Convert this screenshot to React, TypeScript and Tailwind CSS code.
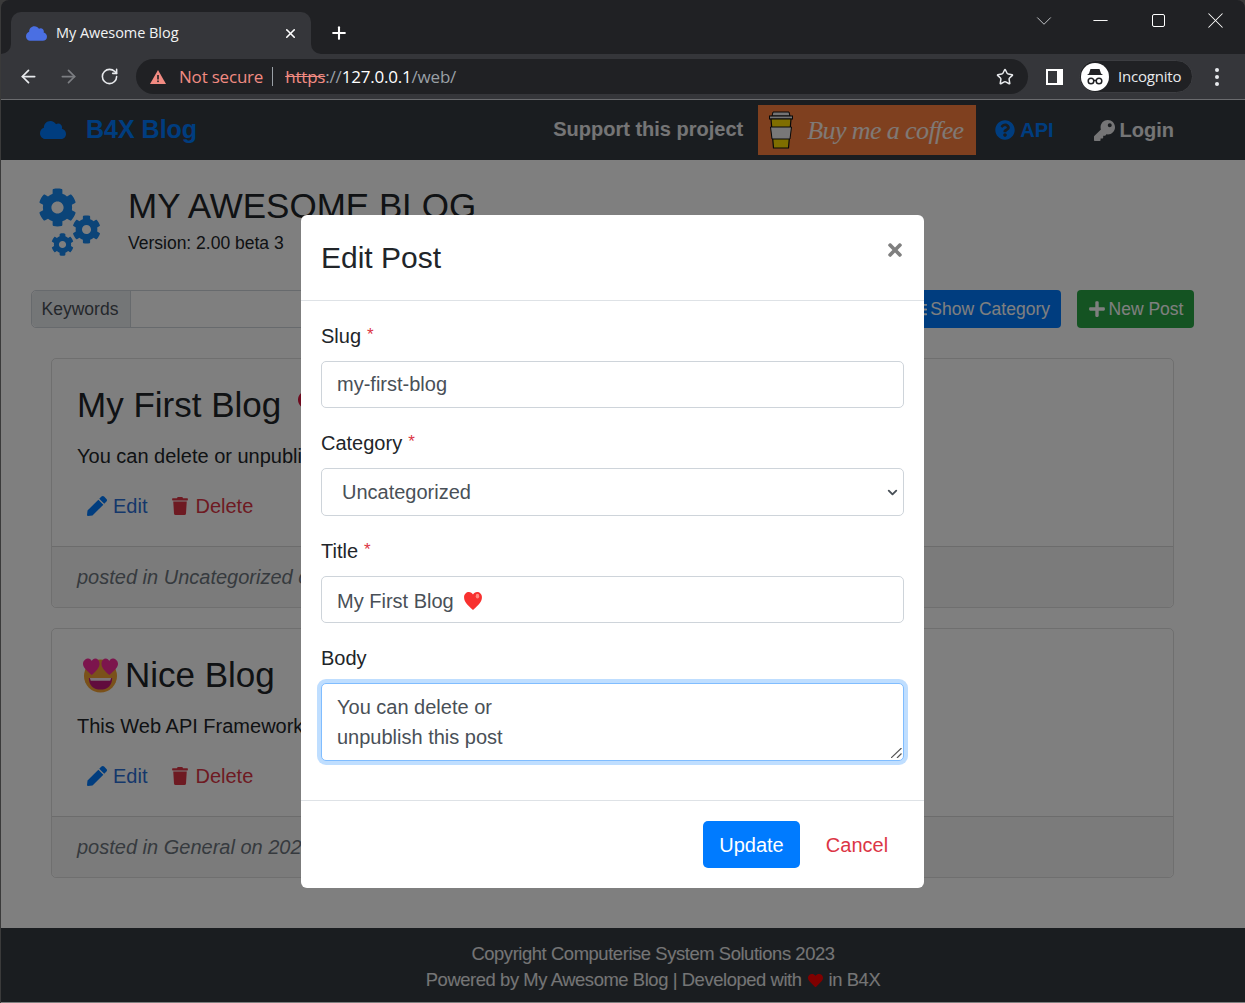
import { ArrowLeft, ArrowRight, ChevronDown, Minus, Plus, RotateCw, Star, X } from "lucide-react";
import { FaCloud, FaCog, FaHeart, FaKey, FaList, FaPen, FaPlus, FaQuestionCircle, FaTimes, FaTrash } from "react-icons/fa";

function HeartEmoji({ size }: { size: number }) {
  return (
    <svg width={size} height={size} viewBox="0 0 32 32" className="shrink-0">
      <path d="M16 29C8 22 3 17 3 10.500C3 6 6.500 3 10 3c2.700 0 4.800 1.400 6 3.600C17.200 4.400 19.300 3 22 3c3.500 0 7 3 7 7.500C29 17 24 22 16 29z" fill="#f8312f" />
      <ellipse cx="22.500" cy="9" rx="2.500" ry="3.500" fill="#ff8a80" />
    </svg>
  );
}

function HeartEyes() {
  return (
    <svg width="35" height="36" viewBox="0 0 36 36" className="shrink-0">
      <circle cx="18" cy="19" r="17" fill="#f5a335" />
      <path d="M6 21h24c0 8-5 12-12 12S6 29 6 21z" fill="#c2187a" />
      <path d="M7 21h22l-1 3H8z" fill="#f8e8f0" />
      <path d="M9 18C3 13 0 10 0 6.500 0 3 3 1 5.500 1 7 1 8.300 2 9 3.500 9.700 2 11 1 12.500 1 15 1 17 3 17 6.500 17 10 14 14 9 18z" fill="#f82a9b" />
      <path d="M27 18c-5-4-8-8-8-11.500C19 3 21 1 23.500 1c1.500 0 2.800 1 3.500 2.500C27.700 2 29 1 30.500 1 33 1 36 3 36 6.500 36 10 33 13 27 18z" fill="#f82a9b" />
    </svg>
  );
}

function CoffeeCup() {
  return (
    <svg width="26" height="38" viewBox="0 0 26 38" className="shrink-0">
      <path d="M5 1h16l1 4H4z" fill="#e8e8e8" stroke="#111" strokeWidth="1" />
      <rect x="1.500" y="5" width="23" height="3" fill="#e8e8e8" stroke="#111" strokeWidth="1" />
      <path d="M3 8h20l-2.500 29h-15z" fill="#ffdd00" stroke="#111" strokeWidth="1.200" />
      <path d="M2.500 16h21l-1.500 12H4z" fill="#f0f0f0" stroke="#111" strokeWidth="1" />
    </svg>
  );
}

function IncognitoIcon() {
  return (
    <svg width="22" height="22" viewBox="0 0 22 22" fill="none">
      <path d="M3 9h16l-2-1.500L15.500 3h-9L5 7.500z" fill="#202124" />
      <circle cx="7" cy="15" r="2.800" stroke="#202124" strokeWidth="1.500" />
      <circle cx="15" cy="15" r="2.800" stroke="#202124" strokeWidth="1.500" />
      <path d="M9.800 14.500h2.400" stroke="#202124" strokeWidth="1.500" />
    </svg>
  );
}

function BrowserChrome() {
  return (
    <div className="h-[100px] shrink-0 bg-[#202124] rounded-t-lg text-white font-['Open_Sans',sans-serif]">
      <div className="h-[54px] flex items-end pl-[10px]">
        <div className="relative w-[300px] h-[42px] bg-[#35363a] rounded-t-[10px] flex items-center pl-[15px] pr-[13px]">
          <svg width="10" height="10" viewBox="0 0 10 10" className="absolute -left-[10px] bottom-0">
            <path d="M10 0v10H0A10 10 0 0 0 10 0z" fill="#35363a" />
          </svg>
          <svg width="10" height="10" viewBox="0 0 10 10" className="absolute -right-[10px] bottom-0">
            <path d="M0 0v10h10A10 10 0 0 1 0 0z" fill="#35363a" />
          </svg>
          <FaCloud size={21} className="text-[#4a6fe3]" />
          <span className="ml-[9px] text-[14.500px] text-[#f1f3f4] tracking-[-0.05px]">My Awesome Blog</span>
          <X size={15} strokeWidth={2.5} className="ml-auto" />
        </div>
        <div className="h-[42px] flex items-center ml-[18px]">
          <Plus size={20} strokeWidth={2.5} />
        </div>
        <div className="ml-auto self-start flex items-center pt-[7px] pr-[1px]">
          <div className="w-[57px] flex justify-center -translate-x-[1px]"><ChevronDown size={26} strokeWidth={0.8} className="text-[#dadce0]" /></div>
          <div className="w-[57px] flex justify-center -translate-x-[1px]"><Minus size={23} strokeWidth={1} /></div>
          <div className="w-[57px] flex justify-center"><div className="w-[13px] h-[13px] border border-white rounded-[2px]" /></div>
          <div className="w-[57px] flex justify-center"><X size={27} strokeWidth={0.9} /></div>
        </div>
      </div>
      <div className="h-[46px] bg-[#35363a] border-b border-[#6a6b6e] flex items-center pl-[17px]">
        <ArrowLeft size={21} strokeWidth={2} className="text-[#e8eaed]" />
        <ArrowRight size={21} strokeWidth={2} className="ml-[19px] text-[#7c7e82]" />
        <RotateCw size={19} strokeWidth={2} className="ml-[21px] text-[#e8eaed]" />
        <div className="ml-[17px] w-[892px] h-[35px] bg-[#202124] rounded-full flex items-center pl-[14px] pr-[14px]">
          <svg width="16" height="14" viewBox="0 0 16 14">
            <path d="M8 0l8 14H0z" fill="#f28b82" />
            <rect x="7.200" y="5" width="1.600" height="4.500" fill="#202124" />
            <rect x="7.200" y="10.500" width="1.600" height="1.600" fill="#202124" />
          </svg>
          <span className="ml-[13px] text-[#f28b82] text-[17px] tracking-[-0.2px]">Not secure</span>
          <div className="ml-[9px] w-px h-[19px] bg-[#9aa0a6]" />
          <span className="ml-[12px] text-[17px] tracking-[-0.2px]">
            <span className="text-[#f28b82] line-through">https</span>
            <span className="text-[#9aa0a6]">://</span>
            <span className="text-white">127.0.0.1</span>
            <span className="text-[#9aa0a6]">/web/</span>
          </span>
          <Star size={18} strokeWidth={2} className="ml-auto text-[#e8eaed]" />
        </div>
        <div className="ml-[18px] w-[17px] h-[16px] border-2 border-white border-r-[6px]" />
        <div className="ml-[16px] w-[114px] h-[33px] bg-[#202124] rounded-full border border-[#3c3d41] flex items-center pl-[1px]">
          <div className="w-[28px] h-[28px] rounded-full bg-white flex items-center justify-center">
            <IncognitoIcon />
          </div>
          <span className="ml-[9px] text-[15px] tracking-[-0.2px] text-[#e8eaed]">Incognito</span>
        </div>
        <div className="ml-[22px] flex flex-col gap-[3px]">
          <div className="w-[4px] h-[4px] rounded-full bg-[#e8eaed]" />
          <div className="w-[4px] h-[4px] rounded-full bg-[#e8eaed]" />
          <div className="w-[4px] h-[4px] rounded-full bg-[#e8eaed]" />
        </div>
      </div>
    </div>
  );
}

function PostCard({ title, emoji, body, footer }: { title: string; emoji?: "heart" | "eyes"; body: string; footer: string }) {
  return (
    <div className="h-[250px] border border-black/[.125] rounded-[5px] flex flex-col">
      <div className="flex-1 pt-[25px] pl-[25px]">
        <div className="h-[42px] flex items-center text-[35px] text-[#212529]">
          {emoji === "eyes" && <span className="ml-[6px] mr-[7px]"><HeartEyes /></span>}
          <span>{title}</span>
          {emoji === "heart" && <FaHeart size={32} className="ml-[17px] text-[#dc143c]" />}
        </div>
        <p className="mt-[15px] text-[20px] leading-[30px] text-[#212529] whitespace-nowrap">{body}</p>
        <div className="mt-[20px] ml-[10px] flex items-center text-[20px] leading-[30px]">
          <FaPen size={20} className="text-[#007bff]" />
          <span className="ml-[6px] text-[#2a6fd6]">Edit</span>
          <FaTrash size={18} className="ml-[24px] text-[#dc3545]" />
          <span className="ml-[6px] text-[#dc3545]">Delete</span>
        </div>
      </div>
      <div className="h-[61px] bg-black/[.03] border-t border-black/[.125] rounded-b-[5px] flex items-center pl-[25px]">
        <span className="text-[20px] italic text-[#6c757d]">{footer}</span>
      </div>
    </div>
  );
}

function Field({ label, required, children }: { label: string; required?: boolean; children: React.ReactNode }) {
  return (
    <div className="mb-[20px]">
      <div className="h-[30px] leading-[30px] mb-[10px] text-[20px] text-[#212529]">
        {label}
        {required && <span className="ml-[6px] text-[#dc3545] text-[17px] leading-none align-[3px]">*</span>}
      </div>
      {children}
    </div>
  );
}

function Blog() {
  return (
    <div className="h-[903px] flex flex-col bg-white font-['Liberation_Sans',Arial,sans-serif]">
      <nav className="h-[60px] shrink-0 bg-[#343a40] flex items-center pl-[39px] pr-[71px]">
        <FaCloud size={26} className="text-[#007bff]" />
        <span className="ml-[20px] text-[25px] font-bold text-[#007bff]">B4X Blog</span>
        <span className="ml-auto -mt-[3px] text-[20px] font-bold text-white/90">Support this project</span>
        <div className="ml-[15px] w-[218px] h-[50px] bg-[#ff813f] flex items-center pl-[10px]">
          <CoffeeCup />
          <span className="ml-[13px] text-[26px] italic font-['Liberation_Serif',serif] tracking-[-0.6px] whitespace-nowrap text-white/90">Buy me a coffee</span>
        </div>
        <FaQuestionCircle size={20} className="ml-[19px] text-[#007bff]" />
        <span className="ml-[5px] -mt-[1px] text-[20px] font-bold text-[#007bff]">API</span>
        <FaKey size={21} className="ml-[40px] text-white/90" />
        <span className="ml-[5px] text-[20px] font-bold text-white/90">Login</span>
      </nav>

      <main className="flex-1 flex flex-col">
        <div className="h-[130px] shrink-0 flex pl-[37px] pt-[26px]">
          <div className="relative w-[64px] h-[70px] text-[#1788f0]">
            <FaCog size={39} className="absolute left-0 top-[2px]" />
            <FaCog size={29} className="absolute left-[34px] top-[29px]" />
            <FaCog size={23} className="absolute left-[13px] top-[47px]" />
          </div>
          <div className="ml-[26px]">
            <div className="-mt-[1px] text-[35px] leading-[42px] text-[#212529]">MY AWESOME BLOG</div>
            <div className="mt-[6px] text-[17.500px] leading-[21px] text-[#212529]">Version: 2.00 beta 3</div>
          </div>
        </div>

        <div className="h-[38px] shrink-0 flex items-start pl-[30px] pr-[51px]">
          <div className="w-[850px] h-[38px] flex border border-[#ced4da] rounded-[5px]">
            <div className="w-[99px] pr-[2px] bg-[#e9ecef] border-r border-[#ced4da] rounded-l-[5px] flex items-center justify-center text-[17.500px] text-[#495057]">Keywords</div>
          </div>
          <div className="ml-auto h-[38px] w-[161px] bg-[#007bff] rounded-[4px] flex items-center justify-end pr-[11px] text-[17.500px] text-white">
            <FaList size={15} className="mr-[3px]" />
            <span>Show Category</span>
          </div>
          <div className="ml-[16px] h-[38px] w-[117px] bg-[#28a745] rounded-[4px] flex items-center justify-center text-[17.500px] text-white">
            <FaPlus size={18} className="mr-[3px]" />
            <span>New Post</span>
          </div>
        </div>

        <div className="mt-[30px] ml-[50px] mr-[71px] flex flex-col gap-[20px]">
          <PostCard title="My First Blog" emoji="heart" body="You can delete or unpublish this post" footer="posted in Uncategorized on 2023-01-20" />
          <PostCard title="Nice Blog" emoji="eyes" body="This Web API Framework is very nice to use" footer="posted in General on 2023-01-20" />
        </div>
      </main>

      <footer className="h-[74px] shrink-0 bg-[#343a40] mb-px pt-[4px] pl-[60px] flex flex-col items-center justify-center text-[18.400px] leading-[26px] tracking-[-0.42px] text-white/90">
        <div>Copyright Computerise System Solutions 2023</div>
        <div className="flex items-center">
          Powered by My Awesome Blog | Developed with
          <FaHeart size={15} className="mx-[6px] text-[#ff0000]" />
          in B4X
        </div>
      </footer>
    </div>
  );
}

function EditModal() {
  const inputClass =
    "block w-full h-[47px] px-[15px] bg-white border border-[#ced4da] rounded-[5px] text-[20px] text-[#495057] outline-none";
  return (
    <div className="absolute left-[301px] top-[215px] w-[623px] h-[673px] bg-white rounded-[6px] font-['Liberation_Sans',Arial,sans-serif]">
      <div className="relative h-[86px] border-b border-[#dee2e6] flex items-center pl-[20px]">
        <h4 className="text-[30px] leading-[36px] mt-[1px] text-[#212529]">Edit Post</h4>
        <FaTimes size={20} className="absolute right-[19px] top-[25px] text-[#7f7f7f]" />
      </div>
      <div className="h-[500px] px-[20px] pt-[20px] border-b border-[#dee2e6]">
        <Field label="Slug" required>
          <input readOnly value="my-first-blog" className={inputClass} />
        </Field>
        <Field label="Category" required>
          <div className="relative">
            <select defaultValue="Uncategorized" className="block w-full h-[48px] pl-[20px] pr-[30px] appearance-none bg-white border border-[#ced4da] rounded-[5px] text-[20px] text-[#495057] outline-none">
              <option>Uncategorized</option>
              <option>General</option>
            </select>
            <ChevronDown size={15} strokeWidth={3} className="absolute right-[4px] top-[17px] text-[#495057]" />
          </div>
        </Field>
        <Field label="Title" required>
          <div className={`${inputClass} flex items-center gap-[8px] pt-[2px]`}>
            <span>My First Blog</span>
            <HeartEmoji size={22} />
          </div>
        </Field>
        <Field label="Body">
          <div className="relative">
            <textarea
              readOnly
              value={"You can delete or\nunpublish this post"}
              className="block w-full h-[78px] px-[15px] py-[8px] bg-white border border-[#80bdff] rounded-[5px] text-[20px] leading-[30px] text-[#495057] outline-none resize-none shadow-[0_0_0_4px_rgba(0,123,255,0.25)]"
            />
            <svg width="11" height="10" viewBox="0 0 11 10" className="absolute right-[2px] bottom-[3px]" stroke="#555" strokeWidth="1.200">
              <path d="M0 10L10.500 0M6 10l4.500-4.500" />
            </svg>
          </div>
        </Field>
      </div>
      <div className="h-[87px] flex items-center justify-end pr-[20px]">
        <button type="button" className="w-[97px] h-[47px] bg-[#007bff] rounded-[5px] text-[20px] text-white">Update</button>
        <button type="button" className="w-[94px] h-[47px] ml-[10px] text-[20px] text-[#dc3545]">Cancel</button>
      </div>
    </div>
  );
}

export default function App() {
  return (
    <div className="relative w-[1245px] h-[1003px] overflow-hidden bg-[#3a3a3a]">
      <div className="pl-px">
        <BrowserChrome />
        <Blog />
      </div>
      <div className="absolute left-px right-0 top-[100px] bottom-0 bg-black/50" />
      <EditModal />
    </div>
  );
}
